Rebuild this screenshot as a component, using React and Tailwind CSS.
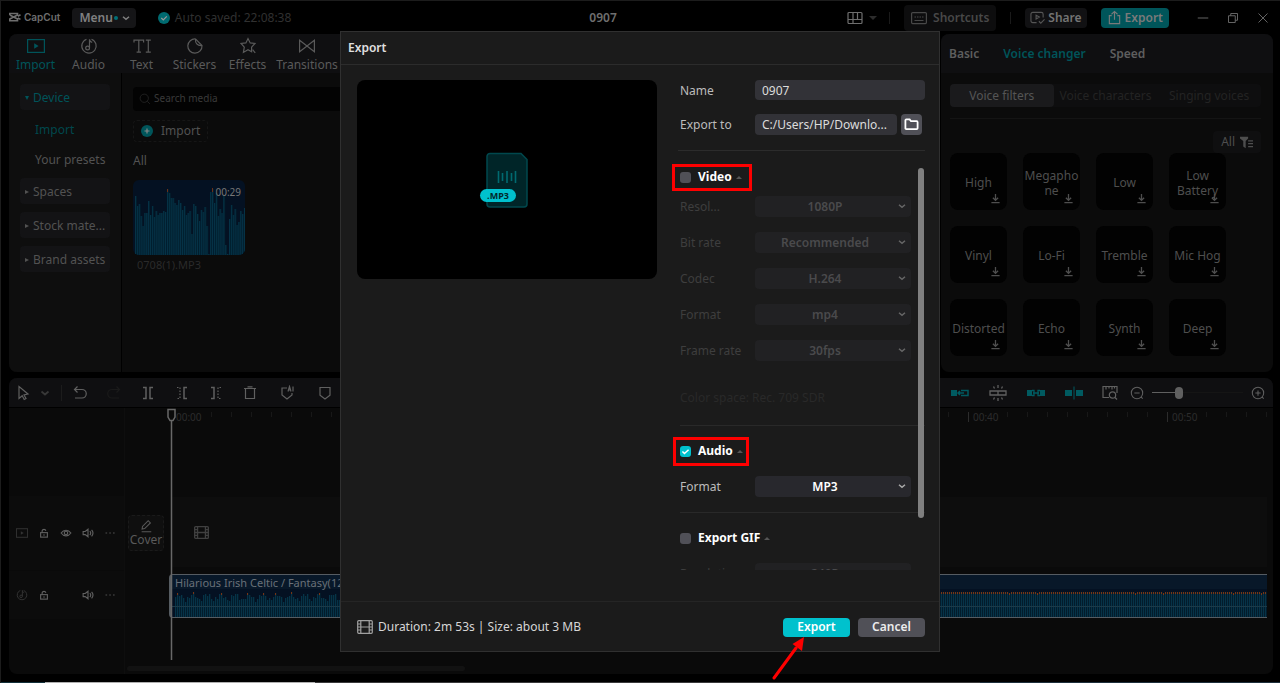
import React, { useState } from "react";
import clsx from "clsx";

const Icon = ({ className = "size-4", children, box = 16, width = 1.2 }) => (
  <svg
    className={clsx("shrink-0", className)}
    viewBox={`0 0 ${box} ${box}`}
    fill="none"
    stroke="currentColor"
    strokeWidth={width}
    aria-hidden="true"
  >
    {children}
  </svg>
);

const icons = {
  import: (
    <>
      <rect x="0.6" y="2.6" width="16.8" height="12.8" />
      <path d="M7.2 6.2v5.6l4.4-2.8z" fill="currentColor" stroke="none" />
    </>
  ),
  audio: (
    <>
      <path d="M6.5 2.2a7.2 7.2 0 1 0 5 0" />
      <circle cx="7.6" cy="11" r="1.9" />
      <path d="M9.5 11V2.2c.2 1.8 1 2.8 2.7 3.2" />
    </>
  ),
  text: (
    <path d="M1 5.5V3.2h9.6v2.3M5.8 3.2v12M3.6 15.2H8M12.8 3.2h5M12.8 15.2h5M15.3 3.2v12" />
  ),
  stickers: (
    <>
      <path d="M9.6 2A7.1 7.1 0 1 0 16 8.6z" />
      <path d="M9.6 2c-.6 4 1.5 7 6.4 6.6" />
    </>
  ),
  effects: (
    <>
      <path d="M12.6 14.8 9 12.8l-4.6 2.6.9-5.2L2 6.5l4.900-.6L9 1.600l2.200 4.300 4.800.6-3.400 3.700z" />
      <path d="M13.6 12.6l2.600 3.200" />
    </>
  ),
  transitions: <path d="M1.6 3.2v11.6L16.4 3.2v11.6z" />,
  lock: (
    <>
      <rect x="3.5" y="7.5" width="9" height="6" />
      <path d="M5.5 7.5V5a2.6 2.6 0 0 1 5 0M8 9.5v2" />
    </>
  ),
  eye: (
    <>
      <path d="M1.500 8c3.400-5 9.600-5 13 0-3.400 5-9.600 5-13 0z" />
      <circle cx="8" cy="8" r="2.3" />
    </>
  ),
  speaker: (
    <path d="M1.500 6v4.200h2.800L8 13V3L4.300 6zM10.500 5.500c1.300 1.500 1.300 3.700 0 5.200M12.800 3.800c2.200 2.500 2.200 6 0 8.600" />
  ),
  dots: <path d="M2 8h2.200M7 8h2.200M12 8h2.200" />,
  film: (
    <>
      <rect x="0.7" y="1.7" width="14.6" height="12.6" rx="1" />
      <path d="M3.800 1.700v12.600M12.200 1.700v12.600M3.800 8h8.400M.7 5h3.100M.7 8h3.100M.7 11h3.100M12.200 5h3.100M12.200 8h3.100M12.200 11h3.100" />
    </>
  ),
  chevron: <path d="M4 6.3l4 3.400 4-3.400" strokeWidth="2" />,
  download: <path d="M8 1.500v9M4.200 7 8 10.800 11.800 7M2 14h12" />,
};

const tabs = [
  { label: "Import", icon: icons.import, active: true },
  { label: "Audio", icon: icons.audio },
  { label: "Text", icon: icons.text },
  { label: "Stickers", icon: icons.stickers },
  { label: "Effects", icon: icons.effects },
  { label: "Transitions", icon: icons.transitions, wide: true },
];

const voices = [
  "High",
  "Megapho ne",
  "Low",
  "Low Battery",
  "Vinyl",
  "Lo-Fi",
  "Tremble",
  "Mic Hog",
  "Distorted",
  "Echo",
  "Synth",
  "Deep",
];

const thumbBars = [
  59, 49, 51, 39, 29, 42, 42, 54, 40, 49, 38, 44, 40, 42, 42, 44, 43, 66, 62,
  57, 57, 52, 50, 55, 52, 45, 49, 40, 42, 44, 21, 51, 49, 41, 34, 45, 43, 48,
  29, 1, 63, 66, 52, 62, 39, 46, 42, 60, 10, 1, 36, 50, 40, 46, 30, 33, 44, 41,
  47,
];

const clipBars = Array.from({ length: 700 }, (_, i) => {
  const wave = Math.sin(i * 0.9) * 3 + Math.sin(i * 2.3) * 2;
  return i < 200 ? Math.round(20 + wave) : Math.round(25 + Math.min(0, wave + 4));
});

const TitleBar = () => (
  <header className="flex h-[34px] items-center border-t border-[#1c1c1c] pl-2 pr-[11px] text-[#6e6e6e]">
    <div className="flex w-[350px] items-center">
      <div className="flex items-center gap-[3px] font-['Inter'] text-[10px] font-semibold">
        <svg className="h-3 w-3" viewBox="0 0 12 12" fill="none" stroke="currentColor" strokeWidth="1.6">
          <path d="M11.500 3.800 8.800 5.200M.8 4V2.500h7.700V4L.8 8v1.700h7.700V8L.8 4M11.500 8.400 8.800 7" />
        </svg>
        CapCut
      </div>
      <button className="ml-3 flex h-5 items-center rounded bg-[#151517] pl-[7px] pr-1 font-semibold text-[#808080]">
        Menu
        <span className="ml-px size-1 rounded-full bg-[#007078]" />
        <Icon className="ml-0.5 size-3">{icons.chevron}</Icon>
      </button>
      <div className="ml-[22px] flex items-center gap-[5px] text-[#303030]">
        <svg className="size-3" viewBox="0 0 12 12" aria-hidden="true">
          <circle cx="6" cy="6" r="6" fill="#006a70" />
          <path d="M3.300 6l2 2 3.500-3.700" fill="none" stroke="#999" strokeWidth="1.2" />
        </svg>
        Auto saved: 22:08:38
      </div>
    </div>
    <h1 className="flex-1 text-center font-semibold">0907</h1>
    <Icon className="size-4">
      <rect x="1" y="2.5" width="14" height="11" rx="1" />
      <path d="M1 9.500h14M6 2.500v7M10.500 2.500v7M6 9.500v4" />
    </Icon>
    <span className="ml-1.5 border-x-4 border-t-4 border-x-transparent border-t-[#2c2c2c]" />
    <span className="ml-3 h-3 w-px bg-[#1a1a1a]" />
    <button className="ml-3.5 flex h-[26px] items-center gap-1.5 rounded bg-[#0d0d0e] px-[7px] font-semibold text-[#484848]">
      <Icon>
        <rect x="0.6" y="2.6" width="14.8" height="11" rx="1" />
        <path d="M3.500 7h1.500M6 7h1.500M8.500 7H10M11 7h1.500M3.500 10.500h9" />
      </Icon>
      Shortcuts
    </button>
    <span className="ml-3.5 h-3 w-px bg-[#1a1a1a]" />
    <button className="ml-3.5 flex h-5 items-center gap-[3px] rounded bg-[#111113] px-[5px] font-semibold text-[#747474]">
      <Icon className="size-[15px] text-[#555]">
        <path d="M7 13.500H3A2 2 0 0 1 1 11.500v-7a2 2 0 0 1 2-2h9a2 2 0 0 1 2 2V8M6.500 5.500v4L10 7.500zM9.500 12l2 2 4-4" />
      </Icon>
      Share
    </button>
    <button className="ml-3.5 flex h-5 items-center gap-[3px] rounded bg-[#00555a] px-1.5 font-semibold text-[#7a7a7a]">
      <Icon className="size-[15px]">
        <path d="M5 6H2.500v8.500h11V6H11M8 10.500V1.500M4.800 4.500 8 1.500l3.200 3" />
      </Icon>
      Export
    </button>
    <button aria-label="Minimize" className="ml-7">
      <Icon className="size-3"><path d="M1 8h14" /></Icon>
    </button>
    <button aria-label="Restore" className="ml-[18px]">
      <Icon className="size-3">
        <path d="M2 5h9v9H2zM5 5V2h9v9h-3" />
      </Icon>
    </button>
    <button aria-label="Close" className="ml-[18px]">
      <Icon className="size-3"><path d="M2 2l12 12M14 2 2 14" /></Icon>
    </button>
  </header>
);

const SideItem = ({ label, open }) => (
  <button
    className={clsx(
      "flex h-[26px] w-full items-center gap-1 rounded bg-[#131315] pl-[5px] pt-0.5 text-left",
      open ? "text-[#00545a]" : "text-[#525252]"
    )}
  >
    {open ? (
      <span className="border-x-2 border-t-4 border-x-transparent border-t-[#00545a]" />
    ) : (
      <span className="border-y-2 border-l-4 border-y-transparent border-l-[#525252]" />
    )}
    {label}
  </button>
);

const MediaPanel = () => (
  <section className="flex w-[430px] flex-col overflow-hidden rounded-lg bg-[#0b0b0b]">
    <nav className="flex h-[39px] shrink-0 bg-[#0f0f11] text-[#5a5a5a]">
      {tabs.map((tab) => (
        <button
          key={tab.label}
          className={clsx(
            "flex flex-col items-center pt-[3px]",
            tab.wide ? "w-[66px]" : "w-[53px]",
            tab.active && "text-[#00545a]"
          )}
        >
          <Icon className="size-[18px]" box={18}>{tab.icon}</Icon>
          <span className="leading-5">{tab.label}</span>
        </button>
      ))}
    </nav>
    <div className="flex flex-1">
      <aside className="w-[113px] shrink-0 border-r border-black bg-[#0e0e0e] px-[11px] pt-[11px] text-[#525252]">
        <SideItem label="Device" open />
        <div className="mt-[5px] pl-[15px]">
          <button className="block h-[30px] text-[#00474c]">Import</button>
          <button className="block h-[30px] whitespace-nowrap">Your presets</button>
        </div>
        <div className="mt-[3px] space-y-2">
          <SideItem label="Spaces" />
          <SideItem label="Stock mate..." />
          <SideItem label="Brand assets" />
        </div>
      </aside>
      <div className="flex-1 pl-[11px] pt-3.5 text-[#525252]">
        <label className="flex h-6 items-center gap-[3px] rounded bg-[#030303] pl-1.5 text-[#222]">
          <Icon className="size-3">
            <circle cx="7" cy="7" r="5.5" />
            <path d="M11 11l3.500 3.500" />
          </Icon>
          <input
            placeholder="Search media"
            className="w-full bg-transparent text-[10px] placeholder:text-[#3a3a3a]"
          />
        </label>
        <button className="mt-[9px] flex h-[22px] items-center gap-2 rounded border border-dashed border-[#161616] px-[7px]">
          <svg className="size-3" viewBox="0 0 12 12" aria-hidden="true">
            <circle cx="6" cy="6" r="6" fill="#00555a" />
            <path d="M3.500 6h5M6 3.500v5" stroke="#888" strokeWidth="1.2" />
          </svg>
          Import
        </button>
        <p className="mt-2.5 leading-[18px]">All</p>
        <figure className="mt-2.5 w-28">
          <div className="relative overflow-hidden rounded-md bg-[#041122]">
            <svg className="block h-[75px] w-28" viewBox="0 0 112 75" aria-hidden="true">
              {thumbBars.map((h, i) => (
                <g key={i}>
                  <rect x={2 + i * 1.88} y={75 - h} width="1.88" height={h} fill="#03202f" />
                  <rect x={2 + i * 1.88} y={75 - h} width="0.9" height={h} fill="#06354a" />
                </g>
              ))}
              <path d="M34.500 9v3M79.500 8v4" stroke="#6b3018" />
            </svg>
            <span className="absolute right-1 top-1 text-[10px] leading-4 text-[#777]">00:29</span>
          </div>
          <figcaption className="pl-1 text-[11px] leading-5 text-[#2a2a2a]">0708(1).MP3</figcaption>
        </figure>
      </div>
    </div>
  </section>
);

const VoicePanel = () => (
  <section className="flex w-[332px] flex-col overflow-hidden rounded-lg bg-[#0b0b0b] text-[#4e4e4e]">
    <nav className="flex h-[39px] shrink-0 items-center gap-6 bg-[#0f0f11] pl-2 font-semibold text-[#5e5e5e]">
      <button>Basic</button>
      <button className="text-[#00545a]">Voice changer</button>
      <button>Speed</button>
    </nav>
    <div className="pl-[9px] pr-3 pt-[11px]">
      <div className="grid h-[23px] grid-cols-3 rounded bg-[#0e0e0f] text-[#232323]">
        <button className="rounded bg-[#1a1a1c] text-[#555]">Voice filters</button>
        <button className="whitespace-nowrap">Voice characters</button>
        <button className="whitespace-nowrap">Singing voices</button>
      </div>
      <div className="mt-[11px] border-t border-[#141414]" />
      <div className="mt-3 flex justify-end">
        <button className="flex h-[22px] items-center gap-[5px] rounded bg-[#0f0f10] px-2">
          All
          <Icon className="size-[13px]" width={1.6}>
            <path d="M0 1h10v2L7 6v9l-3-2V6L0 3z" fill="currentColor" stroke="none" />
            <path d="M10 6h6M10 9.500h6M10 13h6" />
          </Icon>
        </button>
      </div>
      <div className="grid grid-cols-[repeat(4,57px)] gap-4">
        {voices.map((voice) => (
          <button
            key={voice}
            className="relative flex h-[57px] items-center justify-center rounded-lg bg-[#020202] pt-0.5 text-center leading-[15px]"
          >
            {voice}
            <Icon className="absolute bottom-1.5 right-1.5 size-[11px]" width={1.9}>
              {icons.download}
            </Icon>
          </button>
        ))}
      </div>
    </div>
  </section>
);

const ToolButton = ({ label, className, children }) => (
  <button aria-label={label} className={clsx("flex w-[34px] justify-center", className)}>
    <Icon>{children}</Icon>
  </button>
);

const Toolbar = () => (
  <div className="flex h-[30px] shrink-0 items-center justify-between border-b border-black bg-[#0f0f11] text-[#606060]">
    <div className="flex items-center">
      <button aria-label="Select tool" className="ml-1.5">
        <Icon><path d="M4 1.500v12l3.200-2.700 2 3.700 1.800-1-2-3.500 4-1z" /></Icon>
      </button>
      <Icon className="ml-[7px] size-3.5 text-[#383838]">{icons.chevron}</Icon>
      <span className="ml-[9px] h-4 w-px bg-[#1c1c1c]" />
      <ToolButton label="Undo" className="ml-px">
        <path d="M5.500 1.500 2.500 4.500l3 3M2.500 4.500H10a4.200 4.200 0 0 1 0 8.500H3" />
      </ToolButton>
      <ToolButton label="Redo" className="text-[#1a1a1a]">
        <path d="M10.500 1.500l3 3-3 3M13.500 4.500H6a4.200 4.200 0 0 0 0 8.500h7" />
      </ToolButton>
      <ToolButton label="Split">
        <path d="M3 2.500h3v11H3M13 2.500h-3v11h3" strokeWidth="1.5" />
      </ToolButton>
      <ToolButton label="Delete left">
        <path d="M3 2.500h3v11H3" strokeDasharray="1.5 1.5" />
        <path d="M13 2.500h-3v11h3" strokeWidth="1.5" />
      </ToolButton>
      <ToolButton label="Delete right">
        <path d="M13 2.500h-3v11h3" strokeDasharray="1.5 1.5" />
        <path d="M3 2.500h3v11H3" strokeWidth="1.5" />
      </ToolButton>
      <ToolButton label="Delete">
        <path d="M2 3.500h12M5.500 1.800h5M3.500 3.500v10h9v-10" />
      </ToolButton>
      <button aria-label="Auto mark" className="ml-0.5 flex w-9 justify-center">
        <Icon>
          <path d="M8 3H3v7l5 4 5-4V8M9 6.500l1.500-5 1.500 5M9.500 5h2M14 1.500v5" />
        </Icon>
      </button>
      <button aria-label="Marker" className="flex w-10 justify-center">
        <Icon><path d="M3 2.500h10v7.700L8 14l-5-3.800z" /></Icon>
      </button>
    </div>
    <div className="flex items-center">
      <button aria-label="Main track magnet" className="w-[38px] pl-[9px] text-[#005a60]">
        <svg className="h-4 w-[18px]" viewBox="0 0 18 16" aria-hidden="true">
          <path d="M0 5h6v6H0z" fill="currentColor" />
          <path d="M7 8h6M9 6 7 8l2 2M10 5.500h7v5h-7" fill="none" stroke="currentColor" strokeWidth="1.500" />
        </svg>
      </button>
      <button aria-label="Auto snapping" className="w-[38px] pl-[9px]">
        <svg className="h-4 w-[18px]" viewBox="0 0 18 16" fill="none" stroke="currentColor" strokeWidth="1.3" aria-hidden="true">
          <path d="M1 6h16v4H1zM9 6v4M9 0v3M9 13v3M4.500 1.500l1 2M13.500 1.500l-1 2M4.500 14.500l1-2M13.500 14.500l-1-2" />
        </svg>
      </button>
      <button aria-label="Linkage" className="w-[38px] pl-[9px] text-[#005a60]">
        <svg className="h-4 w-[18px]" viewBox="0 0 18 16" aria-hidden="true">
          <path d="M0 5h5v6H0zM13 5h5v6h-5z" fill="currentColor" />
          <path d="M5 5.500h2v5H5M13 5.500h-2v5h2M6 8h6" fill="none" stroke="currentColor" strokeWidth="1.3" />
        </svg>
      </button>
      <button aria-label="Preview axis" className="w-[38px] pl-[9px] text-[#005a60]">
        <svg className="h-4 w-[18px]" viewBox="0 0 18 16" aria-hidden="true">
          <path d="M0 5h7v6H0zM11 5h7v6h-7zM8.500 1.500h1v13h-1z" fill="currentColor" />
        </svg>
      </button>
      <button aria-label="Fit timeline" className="ml-2">
        <Icon>
          <path d="M7 12.500H1v-11h14V8M4 1.500v3M7 1.500v2M10 1.500v3M12.500 1.500v2" />
          <circle cx="10.5" cy="10" r="3.2" />
          <path d="M13 12.500l2 2" />
        </Icon>
      </button>
      <button aria-label="Zoom out" className="ml-3">
        <Icon className="size-3.5">
          <circle cx="8" cy="8" r="6.5" />
          <path d="M5 8h6M12.500 12.500l2 2" />
        </Icon>
      </button>
      <input
        type="range"
        aria-label="Timeline zoom"
        defaultValue="28"
        className="ml-2 h-3 w-[91px] appearance-none bg-transparent bg-[linear-gradient(to_right,#606060_28%,#151515_28%)] bg-[length:100%_1px] bg-center bg-no-repeat [&::-webkit-slider-thumb]:h-3 [&::-webkit-slider-thumb]:w-2 [&::-webkit-slider-thumb]:appearance-none [&::-webkit-slider-thumb]:rounded-sm [&::-webkit-slider-thumb]:bg-[#606060]"
      />
      <button aria-label="Zoom in" className="ml-2 mr-2">
        <Icon className="size-3.5">
          <circle cx="8" cy="8" r="6.5" />
          <path d="M5 8h6M8 5v6M12.500 12.500l2 2" />
        </Icon>
      </button>
    </div>
  </div>
);

const TrackHead = ({ kind, className }) => (
  <div className={clsx("flex items-center gap-2.5 pl-[7px]", className)}>
    <Icon className="size-3 text-[#333]" box={18} width={1.5}>{icons[kind]}</Icon>
    <Icon className="size-3" width={1.5}>{icons.lock}</Icon>
    <Icon className={clsx("size-3", kind === "audio" && "invisible")} width={1.5}>{icons.eye}</Icon>
    <Icon className="size-3" width={1.5}>{icons.speaker}</Icon>
    <Icon className="size-3 text-[#383838]" width={1.8}>{icons.dots}</Icon>
  </div>
);

const Timeline = () => (
  <section className="flex min-h-0 flex-col overflow-hidden rounded-lg bg-[#0a0a0a]">
    <Toolbar />
    <div className="flex min-h-0 flex-1">
      <div className="w-[116px] shrink-0 border-r border-[#0e0e0e] pt-[88px] text-[#606060]">
        <TrackHead kind="import" className="h-[74px] bg-[#0c0c0c]" />
        <TrackHead kind="audio" className="mt-px h-12 bg-[#0c0c0c]" />
      </div>
      <div className="flex min-w-0 flex-1 flex-col pr-1.5">
        <div className="flex min-h-0 flex-1">
          <div className="w-11 shrink-0 pl-[3px] pt-[107px]">
            <button className="flex h-9 w-9 flex-col items-center justify-center rounded border border-dashed border-[#1a1a1a] bg-[#0f0f0f] text-[#5a5a5a]">
              <Icon className="size-3.5">
                <path d="M3.500 11.500l.5-3L10.500 2l2.500 2.500-6.500 6.500zM3 14.500h11" />
              </Icon>
              <span className="leading-[14px]">Cover</span>
            </button>
          </div>
          <div className="relative min-w-0 flex-1">
            <div className="overflow-hidden">
              <div className="flex h-[89px] pl-[3px]">
                {["00:00", "00:10", "00:20", "00:30", "00:40", "00:50"].map((time, i) => (
                  <div key={time} className="flex w-[199px] shrink-0 items-start pt-1">
                    <span
                      className={clsx(
                        "h-2.5 w-[31px] pl-1 text-[10px] leading-[10px] text-[#2c2c2c]",
                        i > 0 && "border-l border-[#2c2c2c]"
                      )}
                    >
                      {time}
                    </span>
                    <svg className="ml-[7px] h-[5px] w-[150px]" viewBox="0 0 150 5" stroke="#181818">
                      <path d="M1.500 0v5M21.500 0v5M41.500 0v5M61.500 0v5M81.500 0v5M101.500 0v5M121.500 0v5M141.500 0v5" />
                    </svg>
                  </div>
                ))}
              </div>
              <div className="ml-[3px] flex h-[70px] items-center bg-[#0d0d0d] pl-[22px] text-[#404040]">
                <Icon className="size-[15px]" width={1.4}>{icons.film}</Icon>
              </div>
              <div className="mt-[7px] h-11 overflow-hidden rounded-l border border-l-2 border-r-0 border-[#565c62] bg-[#041122]">
                <p className="h-3.5 whitespace-nowrap bg-[#081829] pl-1 text-[11px] leading-[15px] text-[#687078]">
                  Hilarious Irish Celtic / Fantasy(1211614)
                </p>
                <svg
                  className="block h-7 w-full"
                  viewBox="0 0 1400 28"
                  preserveAspectRatio="xMinYMin slice"
                  aria-hidden="true"
                >
                  {clipBars.map((h, i) => (
                    <g key={i}>
                      <rect x={4 + i * 2} y={28 - h} width="2" height={h} fill="#031c2b" />
                      <rect x={4 + i * 2} y={28 - h} width="1" height={h} fill="#063348" />
                      {h > 23 && <rect x={4 + i * 2} y={28 - h} width="1" height="2" fill="#7a3414" />}
                    </g>
                  ))}
                  <path d="M0 17.500h1400" stroke="#1c3a48" />
                </svg>
              </div>
            </div>
            <svg
              className="absolute left-0 top-0 h-full w-1.5 overflow-visible"
              fill="none"
              stroke="#686868"
              strokeWidth="1.5"
              aria-hidden="true"
            >
              <path d="M-1 1.500h7v7.500L4 12.500H1L-1 9z" fill="#0a0a0a" />
              <line x1="2.5" y1="13" x2="2.5" y2="100%" />
            </svg>
          </div>
        </div>
        <div className="mb-[3px] ml-0.5 mt-1.5 h-[5px] w-[338px] rounded-full bg-[#121212]" />
      </div>
    </div>
  </section>
);

const SelectRow = ({ id, label, value, disabled }) => (
  <div className="flex h-[21px] items-center">
    <label htmlFor={id} className={clsx("w-[75px] pt-px", disabled ? "text-[#3e3e3e]" : "text-[#bcbcbc]")}>
      {label}
    </label>
    <div className={clsx("relative w-[156px]", disabled ? "text-[#4a4a4c]" : "text-white")}>
      <select
        id={id}
        disabled={disabled}
        className={clsx(
          "block h-[21px] w-full appearance-none rounded pr-4 font-semibold opacity-100 [text-align-last:center]",
          disabled ? "bg-[#212123]" : "bg-[#28282d]"
        )}
      >
        <option>{value}</option>
      </select>
      <Icon className={clsx("pointer-events-none absolute right-[3px] top-1 size-3", disabled ? "text-[#666]" : "text-[#aaa]")}>
        {icons.chevron}
      </Icon>
    </div>
  </div>
);

const CheckRow = ({ label, defaultChecked = false, children }) => {
  const [checked, setChecked] = useState(defaultChecked);
  return (
    <div className="relative flex h-[26px] items-center">
      <label className="flex items-center gap-[7px] font-bold text-white">
        <span className="relative size-[11px]">
          <input
            type="checkbox"
            checked={checked}
            onChange={(e) => setChecked(e.target.checked)}
            className="block size-[11px] appearance-none rounded-[3px] bg-[#505057] checked:bg-[#00c1cd]"
          />
          {checked && (
            <Icon className="pointer-events-none absolute inset-0 size-[11px] text-white" width={2.2}>
              <path d="M3.500 8l3 3 6-5.500" />
            </Icon>
          )}
        </span>
        {label}
      </label>
      <span className="ml-1 border-x-[3px] border-b-[3px] border-x-transparent border-b-[#555]" />
      {children}
    </div>
  );
};

const ExportDialog = () => {
  const [name, setName] = useState("0907");
  const [path, setPath] = useState("C:/Users/HP/Downlo...");

  return (
    <div className="fixed inset-0 flex items-center justify-center">
      <div role="dialog" aria-label="Export" className="flex w-[600px] flex-col border border-[#303030] bg-[#1b1b1b]">
        <h2 className="h-[33px] border-b border-[#2c2c2c] pl-[7px] font-semibold leading-8 text-[#e0e0e0]">Export</h2>
        <div className="flex h-[537px] justify-between border-b border-[#252525] pl-4 pr-3.5 pt-[15px]">
          {/* Preview */}
          <div className="flex h-[199px] w-[300px] items-center justify-center rounded-lg bg-black">
            <svg className="ml-[-6px] h-14 w-[50px]" viewBox="0 0 50 56" aria-hidden="true">
              <path
                d="M11 1.500h31l6 6V52a3 3 0 0 1-3 3H11a3 3 0 0 1-3-3V4.500a3 3 0 0 1 3-3z"
                fill="#002528"
                stroke="#00484d"
                strokeWidth="1.5"
              />
              <path d="M19.500 19v12M23.500 21v8M28 19v12M32.500 21v8M36.500 19v12" stroke="#006a70" strokeWidth="1.6" />
              <rect x="1" y="37" width="36" height="13" rx="6.5" fill="#00c1cd" />
              <text x="19" y="47" textAnchor="middle" fontSize="9" fontWeight="700" fill="#00292c">
                .MP3
              </text>
            </svg>
          </div>

          {/* Settings */}
          <div className="flex w-[253px] flex-col">
            <div className="flex h-5 items-center pl-2">
              <label htmlFor="name" className="w-[75px] pt-px text-[#bcbcbc]">Name</label>
              <input
                id="name"
                value={name}
                onChange={(e) => setName(e.target.value)}
                className="h-5 min-w-0 flex-1 rounded bg-[#323237] px-[7px] text-[#dcdcdc]"
              />
            </div>
            <div className="mt-3.5 flex h-[21px] items-center pl-2">
              <label htmlFor="path" className="w-[75px] pt-px text-[#bcbcbc]">Export to</label>
              <input
                id="path"
                value={path}
                onChange={(e) => setPath(e.target.value)}
                className="h-[21px] w-[142px] rounded bg-[#323237] px-[7px] text-[#dcdcdc]"
              />
              <button aria-label="Choose folder" className="ml-1 flex size-[21px] items-center justify-center rounded bg-[#505057] text-white">
                <Icon className="size-[15px]" width={1.9}>
                  <path d="M1.500 3.500q0-1 1-1H6l1.500 2h6q1 0 1 1V12q0 1-1 1h-11q-1 0-1-1z" />
                </Icon>
              </button>
            </div>
            <div className="ml-1.5 mt-[15px] border-t border-[#2c2c2c]" />

            <div className="mt-[13px] flex min-h-0">
              <div className="h-[406px] flex-1 overflow-hidden pl-2">
                <CheckRow label="Video">
                  <span className="pointer-events-none absolute -left-2 top-0 h-[27px] w-20 border-3 border-[#fe0000]" />
                </CheckRow>
                <div className="mt-1.5 space-y-[15px]">
                  <SelectRow id="resolution" label="Resol..." value="1080P" disabled />
                  <SelectRow id="bitrate" label="Bit rate" value="Recommended" disabled />
                  <SelectRow id="codec" label="Codec" value="H.264" disabled />
                  <SelectRow id="format" label="Format" value="mp4" disabled />
                  <SelectRow id="framerate" label="Frame rate" value="30fps" disabled />
                </div>
                <p className="mt-7 leading-[18px] text-[#292929]">Color space: Rec. 709 SDR</p>
                <div className="mt-[18px] border-t border-[#292929]" />
                <div className="mt-3">
                  <CheckRow label="Audio" defaultChecked>
                    <span className="pointer-events-none absolute -left-[7px] -top-px h-[29px] w-[76px] border-3 border-[#fe0000]" />
                  </CheckRow>
                </div>
                <div className="mt-3">
                  <SelectRow id="audioformat" label="Format" value="MP3" />
                </div>
                <div className="mt-[15px] border-t border-[#292929]" />
                <div className="mt-3">
                  <CheckRow label="Export GIF" />
                </div>
                <div className="mt-3">
                  <SelectRow id="gifresolution" label="Resolution" value="240P" disabled />
                </div>
              </div>
              <div className="ml-[-7px] mr-px mt-1 h-[350px] w-1.5 rounded-full bg-[#808080]" />
            </div>
          </div>
        </div>

        <div className="flex h-[49px] items-center pl-4 pr-3.5 pt-px text-[#d6d6d6]">
          <Icon className="size-4 text-[#a0a0a0]">{icons.film}</Icon>
          <span className="ml-[5px] flex-1">Duration: 2m 53s | Size: about 3 MB</span>
          <button className="relative h-[19px] w-[67px] rounded bg-[#00c1cd] font-semibold text-white">
            Export
            <svg className="pointer-events-none absolute -left-3 top-[19px] h-[43px] w-9" viewBox="0 0 36 43" aria-hidden="true">
              <path d="M3 41 25 11" stroke="#fe0000" strokeWidth="3" strokeLinecap="round" />
              <path d="M33 0 31 14 21.500 7z" fill="#fe0000" />
            </svg>
          </button>
          <button className="ml-2 h-[19px] w-[67px] rounded bg-[#505057] font-semibold text-[#ececec]">Cancel</button>
        </div>
      </div>
    </div>
  );
};

const App = () => (
  <div className="flex h-screen min-h-[683px] flex-col border-l border-[#1c1c1c] bg-black font-['Noto_Sans',sans-serif] text-xs">
    <TitleBar />
    <main className="grid min-h-0 flex-1 grid-rows-[338fr_296fr] gap-1.5 pl-2 pr-[7px]">
      <div className="flex min-h-0 justify-between">
        <MediaPanel />
        <VoicePanel />
      </div>
      <Timeline />
    </main>
    <div className="mt-2 flex h-px shrink-0 bg-[#3a3a3c]">
      <span className="w-11 bg-[#12303a]" />
      <span className="w-[270px] bg-[#b0b0b0]" />
      <span className="flex-1" />
      <span className="w-[300px] bg-[#1d2f3c]" />
    </div>
    <ExportDialog />
  </div>
);

export default App;
